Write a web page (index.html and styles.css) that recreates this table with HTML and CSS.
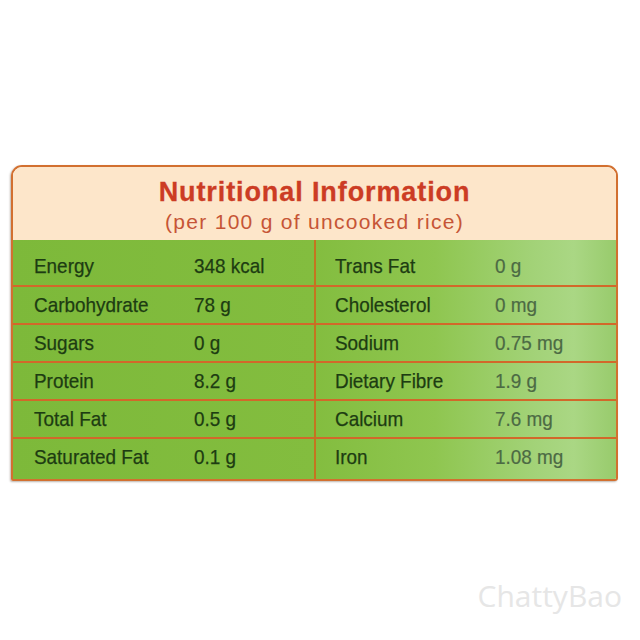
FILE: index.html
```html
<!DOCTYPE html>
<html lang="en">
<head>
<meta charset="utf-8">
<title>Nutritional Information</title>
<link rel="stylesheet" href="styles.css">
</head>
<body>
<div class="page">
  <div class="card">
    <div class="head">
      <div class="title">Nutritional Information</div>
      <div class="sub">(per 100 g of uncooked rice)</div>
    </div>
    <div class="table">
      <div class="half left">
        <div class="row"><span class="lab">Energy</span><span class="val">348 kcal</span></div>
        <div class="row"><span class="lab">Carbohydrate</span><span class="val">78 g</span></div>
        <div class="row"><span class="lab">Sugars</span><span class="val">0 g</span></div>
        <div class="row"><span class="lab">Protein</span><span class="val">8.2 g</span></div>
        <div class="row"><span class="lab">Total Fat</span><span class="val">0.5 g</span></div>
        <div class="row"><span class="lab">Saturated Fat</span><span class="val">0.1 g</span></div>
      </div>
      <div class="half right">
        <div class="row"><span class="lab">Trans Fat</span><span class="val">0 g</span></div>
        <div class="row"><span class="lab">Cholesterol</span><span class="val">0 mg</span></div>
        <div class="row"><span class="lab">Sodium</span><span class="val">0.75 mg</span></div>
        <div class="row"><span class="lab">Dietary Fibre</span><span class="val">1.9 g</span></div>
        <div class="row"><span class="lab">Calcium</span><span class="val">7.6 mg</span></div>
        <div class="row"><span class="lab">Iron</span><span class="val">1.08 mg</span></div>
      </div>
    </div>
  </div>
  <div class="mark">ChattyBao</div>
</div>
</body>
</html>
```
FILE: styles.css
```css
html, body {
  margin: 0;
  padding: 0;
  background: #ffffff;
}
.page {
  width: 640px;
  height: 640px;
  box-sizing: border-box;
  padding: 165px 0 0 11px;
  display: flex;
  flex-direction: column;
  font-family: "Liberation Sans", Arial, sans-serif;
}
.card {
  width: 607px;
  box-sizing: border-box;
  border: 2px solid #d27030;
  border-radius: 11px 11px 3px 2px;
  overflow: hidden;
  box-shadow: -1px 1px 2px rgba(60, 40, 20, 0.35);
}
.head {
  background: #fde6ca;
  height: 73px;
  box-sizing: border-box;
  padding-top: 12px;
  display: flex;
  flex-direction: column;
  align-items: center;
}
.title {
  color: #cc3c24;
  font-weight: bold;
  font-size: 27px;
  line-height: 27px;
  letter-spacing: 0.9px;
  -webkit-text-stroke: 0.3px #cc3c24;
}
.sub {
  color: #c65536;
  font-size: 21px;
  line-height: 20px;
  letter-spacing: 1.3px;
  margin-top: 6px;
}
.table {
  display: flex;
  background: linear-gradient(to right, #7db93a 0%, #83bd3f 50%, #8fc650 70%, #a2d277 86%, #aad784 93%, #98cb6c 100%);
  padding: 7px 0 4px;
  font-size: 21px;
}
.half {
  flex: 1;
  display: flex;
  flex-direction: column;
}
.left {
  border-right: 2px solid #c47420;
  margin-top: -7px;
  padding-top: 7px;
  margin-bottom: -4px;
  padding-bottom: 4px;
}
.row {
  height: 38px;
  display: flex;
  align-items: center;
  box-sizing: border-box;
}
.row + .row {
  border-top: 2px solid #d2682a;
}
.left .row { padding-left: 21px; }
.right .row { padding-left: 19px; }
.lab, .val {
  display: inline-block;
  transform: scaleX(0.9);
  transform-origin: left center;
  color: #1d3c12;
  -webkit-text-stroke: 0.25px #1d3c12;
  white-space: nowrap;
}
.lab {
  width: 160px;
  flex: none;
}
.right .val {
  color: #4c6a44;
  -webkit-text-stroke: 0.2px #4c6a44;
}
.mark {
  align-self: flex-end;
  margin: 97px 18px 0 0;
  color: #e6e6e6;
  font-family: "Open Sans", sans-serif;
  font-size: 30px;
  line-height: 36px;
}
```
